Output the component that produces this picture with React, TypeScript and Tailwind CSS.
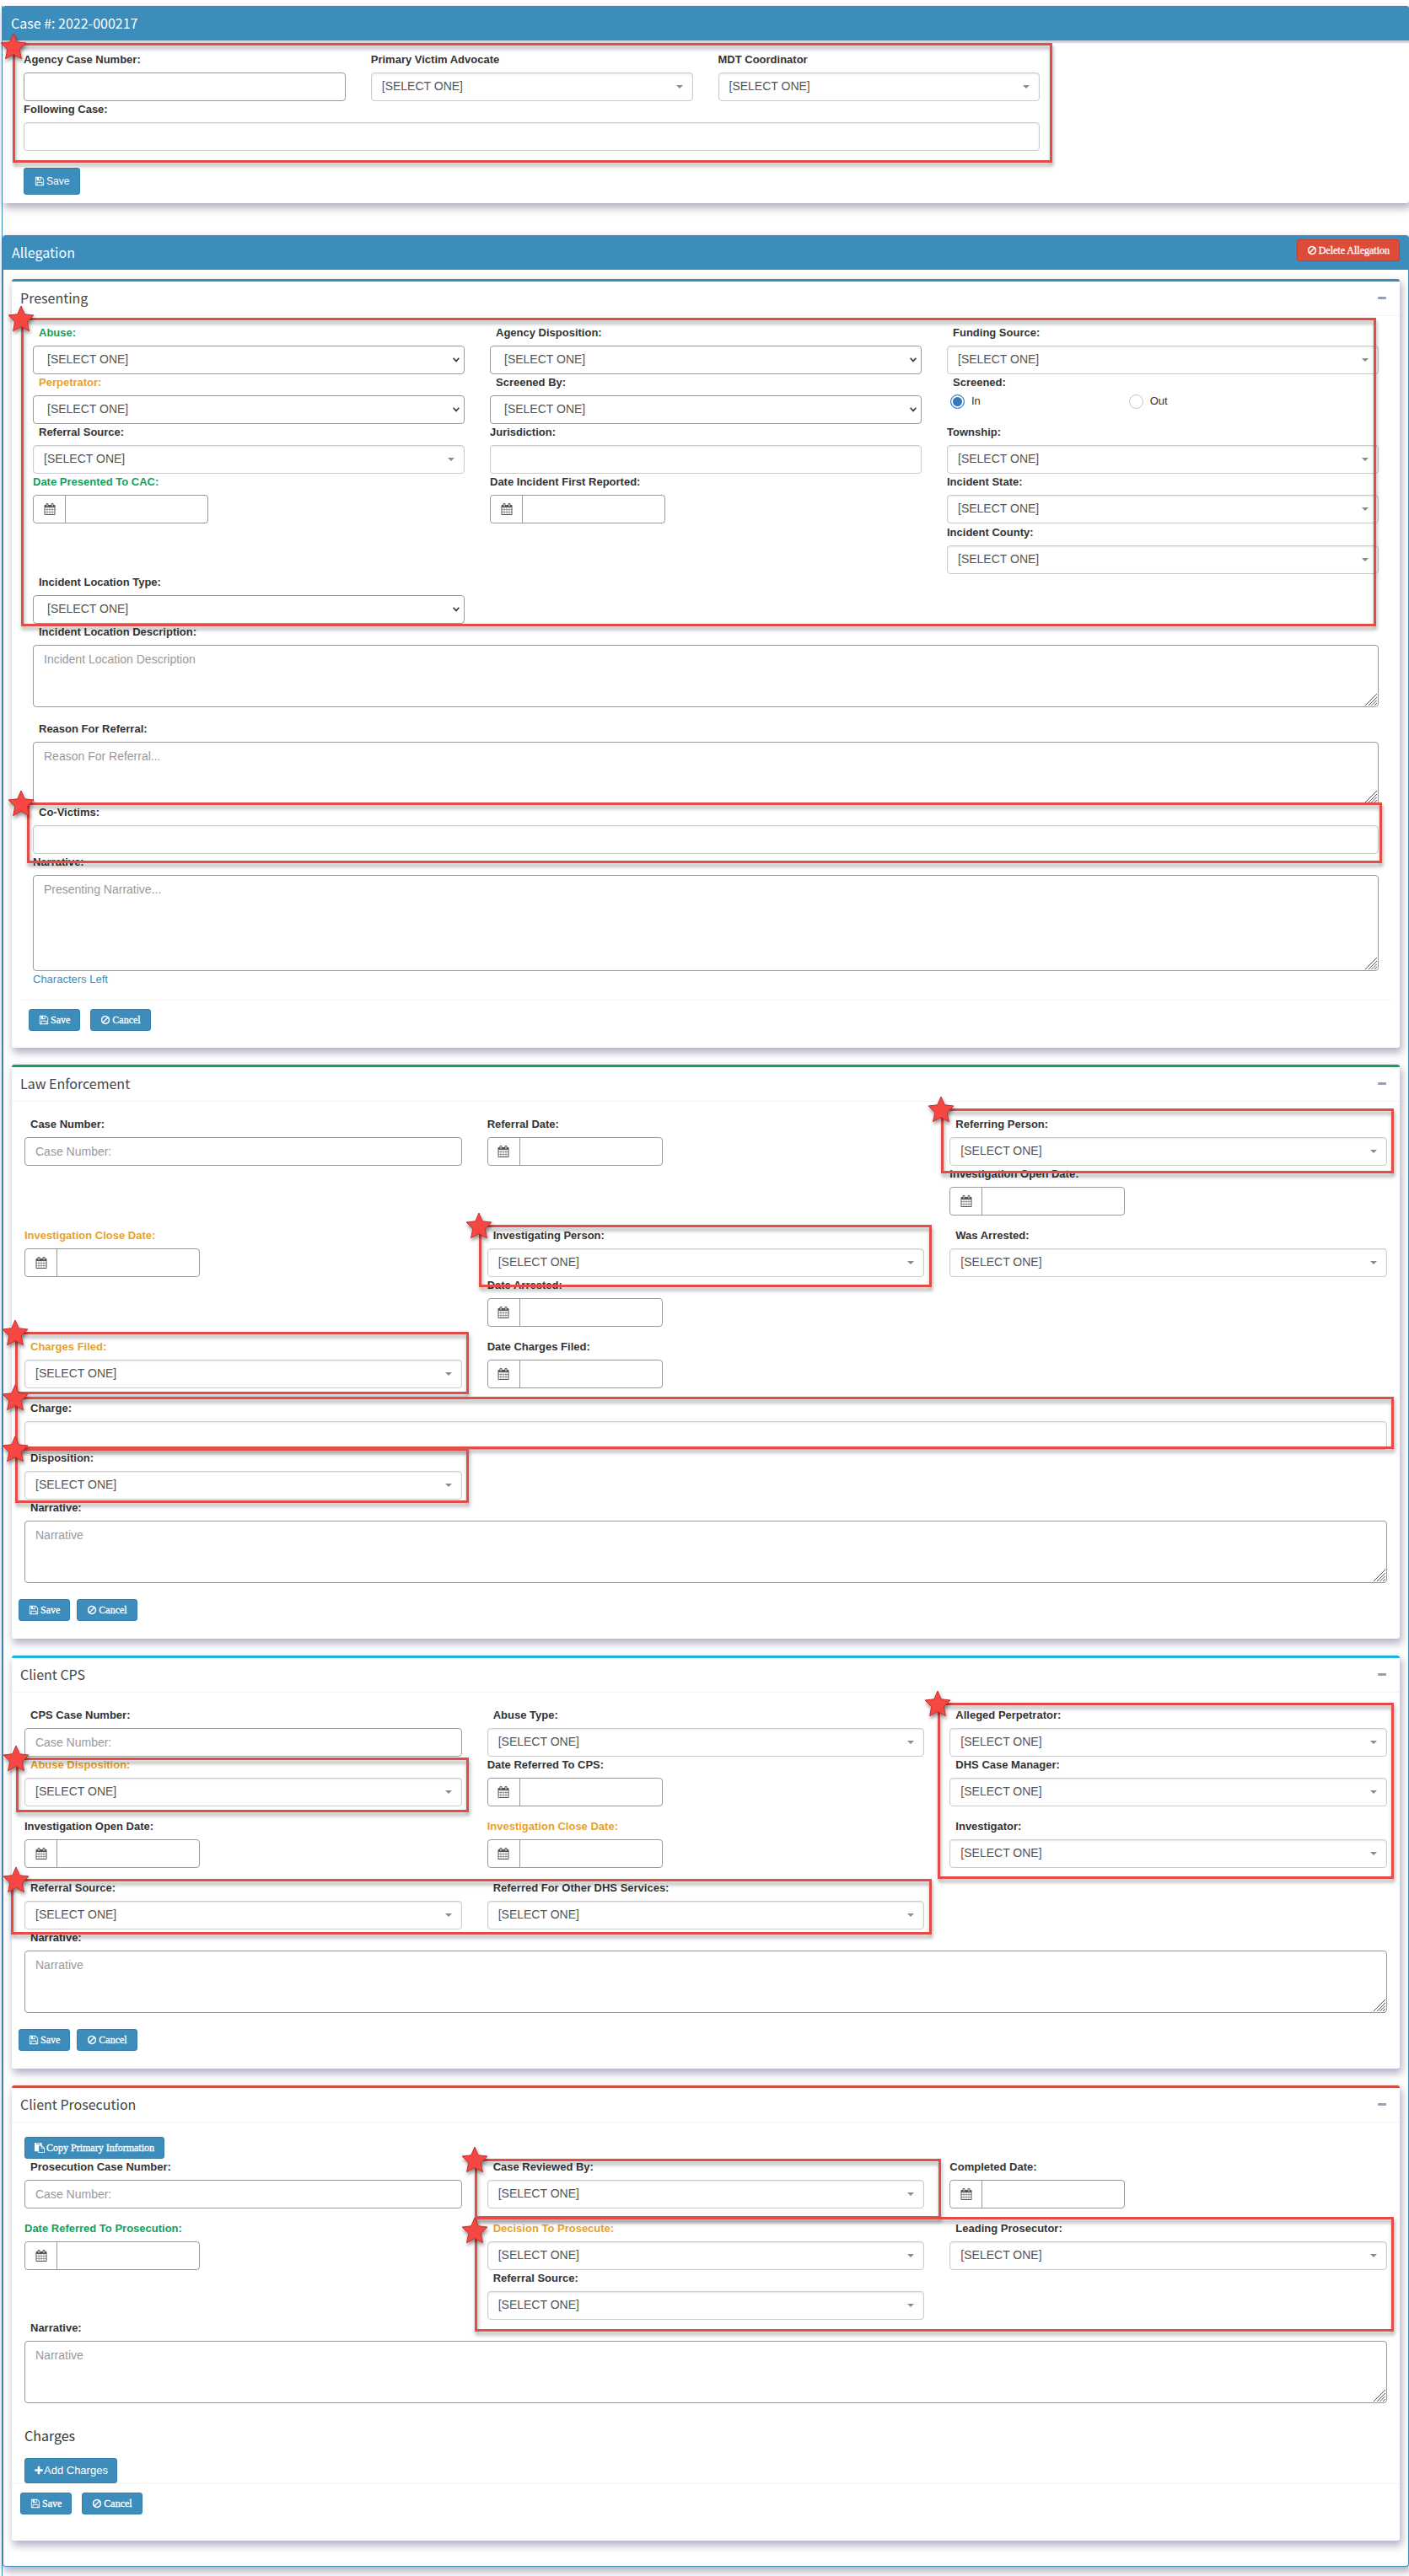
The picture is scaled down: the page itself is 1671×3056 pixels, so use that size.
import { useId } from "react";
import type { ReactNode } from "react";

const ICONS = {
  calendar:
    "M192 1664h288v-288h-288v288zM544 1664h320v-288h-320v288zM192 1312h288v-320h-288v320zM544 1312h320v-320h-320v320zM192 928h288v-288h-288v288zM928 1664h320v-288h-320v288zM544 928h320v-288h-320v288zM1312 1664h288v-288h-288v288zM928 1312h320v-320h-320v320zM576 448v-288q0-13-9.5-22.5t-22.5-9.5h-64q-13 0-22.5 9.5t-9.5 22.5v288q0 13 9.5 22.5t22.5 9.5h64q13 0 22.5-9.5t9.5-22.5zM1312 1312h288v-320h-288v320zM928 928h320v-288h-320v288zM1312 928h288v-288h-288v288zM1344 448v-288q0-13-9.5-22.5t-22.5-9.5h-64q-13 0-22.5 9.5t-9.5 22.5v288q0 13 9.5 22.5t22.5 9.5h64q13 0 22.5-9.5t9.5-22.5zM1728 384v1280q0 52-38 90t-90 38h-1408q-52 0-90-38t-38-90v-1280q0-52 38-90t90-38h128v-96q0-66 47-113t113-47h64q66 0 113 47t47 113v96h384v-96q0-66 47-113t113-47h64q66 0 113 47t47 113v96h128q52 0 90 38t38 90z",
  ban: "M1440 893q0-161-87-295l-754 753q137 89 297 89 111 0 211.5-43.5t173.5-116.5 116-174.5 43-212.5zm-999 299l755-754q-135-91-300-91-148 0-273 73t-198 199-73 274q0 162 89 299zm1223-299q0 157-61 300t-163.5 246-245 164-298.5 61-298.5-61-245-164-163.5-246-61-300 61-299.5 163.5-245.5 245-164 298.5-61 298.5 61 245 164 163.5 245.5 61 299.5z",
  save: "M512 1536h768v-384h-768v384zm896 0h128v-896q0-14-10-38.5t-20-34.5l-281-281q-10-10-34-20t-39-10v416q0 40-28 68t-68 28h-576q-40 0-68-28t-28-68v-416h-128v1280h128v-416q0-40 28-68t68-28h832q40 0 68 28t28 68v416zm-384-928v-320q0-13-9.5-22.5t-22.5-9.5h-192q-13 0-22.5 9.5t-9.5 22.5v320q0 13 9.5 22.5t22.5 9.5h192q13 0 22.5-9.5t9.5-22.5zm640 32v928q0 40-28 68t-68 28h-1344q-40 0-68-28t-28-68v-1344q0-40 28-68t68-28h928q40 0 88 20t76 48l280 280q28 28 48 76t20 88z",
  plus: "M1600 736v192q0 40-28 68t-68 28h-416v416q0 40-28 68t-68 28h-192q-40 0-68-28t-28-68v-416h-416q-40 0-68-28t-28-68v-192q0-40 28-68t68-28h416v-416q0-40 28-68t68-28h192q40 0 68 28t28 68v416h416q40 0 68 28t28 68z",
  paste:
    "M768 1664h896v-640h-416q-40 0-68-28t-28-68v-416h-384v1152zm256-1440v-64q0-13-9.5-22.5t-22.5-9.5h-704q-13 0-22.5 9.5t-9.5 22.5v64q0 13 9.5 22.5t22.5 9.5h704q13 0 22.5-9.5t9.5-22.5zm256 672h299l-299-299v299zm512 128v672q0 40-28 68t-68 28h-960q-40 0-68-28t-28-68v-160h-544q-40 0-68-28t-28-68v-1344q0-40 28-68t68-28h1088q40 0 68 28t28 68v328q21 13 36 28l408 408q28 28 48 76t20 88z",
};

type IconName = keyof typeof ICONS;

function Icon({ name, className = "size-3" }: { name: IconName; className?: string }) {
  return (
    <svg viewBox="0 0 1792 1792" fill="currentColor" aria-hidden="true" className={`shrink-0 ${className}`}>
      <path d={ICONS[name]} />
    </svg>
  );
}

/* ---------- callouts ---------- */

function Highlight({ className, star = "-left-4 -top-[15px]" }: { className: string; star?: string }) {
  return (
    <div className={`pointer-events-none absolute z-10 ${className}`} aria-hidden="true">
      <div className="absolute inset-0 border-3 border-[#e34d49] [filter:drop-shadow(1px_4px_2px_rgba(0,0,0,0.35))]" />
      <svg
        viewBox="0 0 32 32"
        className={`absolute z-20 size-8 overflow-visible [filter:drop-shadow(1px_3px_2px_rgba(0,0,0,0.45))] ${star}`}
      >
        <path
          d="M16 1 L20.2 10.8 L31 12 L23.2 19.6 L25.4 30.6 L16 25.4 L6.6 30.6 L8.8 19.6 L1 12 L11.8 10.8 Z"
          fill="#f74743"
          stroke="#c9302c"
          strokeWidth="1"
          strokeLinejoin="round"
        />
      </svg>
    </div>
  );
}

/* ---------- form pieces ---------- */

type Tone = "dark" | "green" | "orange";
const TONES: Record<Tone, string> = {
  dark: "text-[#333333]",
  green: "text-[#149f5b]",
  orange: "text-[#e8a12b]",
};

type Kind = "select" | "native" | "date" | "input" | "tags" | "textarea";

interface FieldProps {
  label: string;
  kind: Kind;
  tone?: Tone;
  flush?: boolean;
  placeholder?: string;
  tall?: boolean;
  className?: string;
  children?: ReactNode;
}

function Control({ id, kind, placeholder, tall }: { id: string; kind: Kind; placeholder?: string; tall?: boolean }) {
  if (kind === "select")
    return (
      <div className="relative">
        <select
          id={id}
          className="block h-[34px] w-full appearance-none rounded border border-[#cccccc] bg-white pr-8 pb-0.5 pl-3 text-sm text-[#555555] shadow-[inset_0_1px_2px_rgba(0,0,0,0.1)]"
        >
          <option>[SELECT ONE]</option>
        </select>
        <svg viewBox="0 0 8 4" className="pointer-events-none absolute top-[15px] right-3 h-1 w-2" aria-hidden="true">
          <path d="M0 0h8L4 4z" fill="#8a8a8a" />
        </svg>
      </div>
    );
  if (kind === "native")
    return (
      <div className="relative">
        <select
          id={id}
          className="block h-[34px] w-full appearance-none rounded border border-[#9a9a9a] bg-white pr-8 pb-0.5 pl-4 text-sm text-[#555555]"
        >
          <option>[SELECT ONE]</option>
        </select>
        <svg viewBox="0 0 8 6" className="pointer-events-none absolute top-[14px] right-1.5 h-1.5 w-2" aria-hidden="true">
          <path d="M.7 .7 4 4.6 7.3 .7" fill="none" stroke="#333333" strokeWidth="1.6" />
        </svg>
      </div>
    );
  if (kind === "date")
    return (
      <div className="flex h-[34px] w-52 rounded border border-[#9a9a9a] bg-white">
        <span className="flex w-[38px] items-center justify-center border-r border-[#9a9a9a] text-[#555555]">
          <Icon name="calendar" className="size-3.5" />
        </span>
        <input id={id} type="text" className="min-w-0 flex-1 rounded-r px-3 text-sm text-[#555555] outline-none" />
      </div>
    );
  if (kind === "textarea")
    return (
      <div className="relative">
        <textarea
          id={id}
          placeholder={placeholder}
          className={`block w-full resize-none rounded border border-[#9a9a9a] bg-white px-3 py-1.5 text-sm leading-5 placeholder:text-[#999999] ${tall ? "h-[114px]" : "h-[74px]"}`}
        />
        <svg viewBox="0 0 14 14" className="pointer-events-none absolute right-0.5 bottom-0.5 size-3.5" aria-hidden="true">
          <path d="M0 14 14 0M4 14 14 4M7.5 14 14 7.5M11 14 14 11" stroke="#555555" strokeWidth="1" />
        </svg>
      </div>
    );
  return (
    <input
      id={id}
      type="text"
      placeholder={placeholder}
      className={
        kind === "tags"
          ? "block h-[34px] w-full rounded border border-[#cccccc] bg-white px-3 text-sm shadow-[inset_0_1px_2px_rgba(0,0,0,0.08)]"
          : "block h-[34px] w-full rounded border border-[#9a9a9a] bg-white px-3 text-sm placeholder:text-[#999999]"
      }
    />
  );
}

function Field({ label, kind, tone = "dark", flush, placeholder, tall, className = "", children }: FieldProps) {
  const id = useId();
  return (
    <div className={`relative ${className}`}>
      <label
        htmlFor={id}
        className={`mb-[5px] block text-[13px] leading-5 font-bold ${flush ? "" : "pl-[7px]"} ${TONES[tone]}`}
      >
        {label}
      </label>
      <Control id={id} kind={kind} placeholder={placeholder} tall={tall} />
      {children}
    </div>
  );
}

function SmallButton({ icon, children, danger }: { icon: IconName; children: ReactNode; danger?: boolean }) {
  return (
    <button
      type="button"
      className={`flex h-[26px] items-center gap-0.5 rounded-[3px] border px-[11px] font-["Liberation_Serif",serif] text-xs font-normal text-white [-webkit-text-stroke:0.3px] ${
        danger ? "border-[#d73925] bg-[#dd4b39]" : "border-[#367fa9] bg-[#3c8dbc]"
      }`}
    >
      <Icon name={icon} />
      {children}
    </button>
  );
}

const HEADING = 'font-["Noto_Sans_CJK_SC",sans-serif] text-base leading-6 font-normal';
const SHADOW = "shadow-[2px_5px_10px_1px_rgba(70,65,110,0.4)]";

function Panel({ title, accent, children }: { title: string; accent: string; children: ReactNode }) {
  return (
    <section className={`rounded-[3px] border-t-3 bg-white ${accent} ${SHADOW}`}>
      <header className="flex h-[41px] items-center justify-between border-b border-[#f4f4f4] px-2.5 pb-0.5">
        <h3 className={`${HEADING} text-[#444444]`}>{title}</h3>
        <button type="button" aria-label={`Collapse ${title}`} className="flex h-5 items-center px-1.5">
          <svg viewBox="0 0 10 3" className="h-[3px] w-2.5" aria-hidden="true">
            <rect width="10" height="3" rx="1" fill="#97a0b3" />
          </svg>
        </button>
      </header>
      {children}
    </section>
  );
}

const GRID = "relative grid grid-cols-3 items-start gap-x-[30px]";

/* ---------- sections ---------- */

function CaseBox() {
  return (
    <section className={`rounded-[3px] bg-white ${SHADOW}`}>
      <header className="flex h-[41px] items-center rounded-t-[3px] bg-[#3c8dbc] px-2.5 pb-0.5 shadow-[0_3px_1px_#d2d2dc]">
        <h2 className={`${HEADING} text-white`}>Case #: 2022-000217</h2>
      </header>
      <div className="pt-[13px] pr-9 pb-2.5 pl-[25px]">
        <div className={`${GRID} w-3/4`}>
          <Field label="Agency Case Number:" kind="input" flush />
          <Field label="Primary Victim Advocate" kind="select" flush />
          <Field label="MDT Coordinator" kind="select" flush />
          <Field label="Following Case:" kind="tags" flush className="col-span-3" />
          <Highlight className="-top-2.5 -right-[15px] -bottom-3.5 -left-[13px]" star="-left-[15px] -top-3" />
        </div>
        <button
          type="button"
          className="mt-5 flex h-8 items-center gap-0.5 rounded-[3px] border border-[#367fa9] bg-[#3c8dbc] px-3 text-xs text-white"
        >
          <Icon name="save" />
          Save
        </button>
      </div>
    </section>
  );
}

function Presenting() {
  return (
    <Panel title="Presenting" accent="border-[#3c8dbc]">
      <div className="px-[25px] pt-2.5">
        <div className={GRID}>
          <Field label="Abuse:" kind="native" tone="green" />
          <Field label="Agency Disposition:" kind="native" />
          <Field label="Funding Source:" kind="select" />
          <Field label="Perpetrator:" kind="native" tone="orange" />
          <Field label="Screened By:" kind="native" />
          <fieldset className="text-[13px] text-[#333333]">
            <legend className="pl-[7px] text-[13px] leading-5 font-bold">Screened:</legend>
            <div className="grid grid-cols-12 pt-0.5 pl-1">
              {["In", "Out"].map((name, i) => (
                <label key={name} className="col-span-5 flex h-5 items-center gap-2">
                  <input
                    type="radio"
                    name="screened"
                    defaultChecked={i === 0}
                    className="size-[17px] appearance-none rounded-full border border-[#c4c4c4] bg-white checked:border-[#337ab7] checked:bg-[#337ab7] checked:shadow-[inset_0_0_0_2px_white]"
                  />
                  {name}
                </label>
              ))}
            </div>
          </fieldset>
          <Field label="Referral Source:" kind="select" />
          <Field label="Jurisdiction:" kind="tags" flush />
          <Field label="Township:" kind="select" flush />
          <Field label="Date Presented To CAC:" kind="date" tone="green" flush />
          <Field label="Date Incident First Reported:" kind="date" flush />
          <Field label="Incident State:" kind="select" flush />
          <Field label="Incident County:" kind="select" flush className="col-start-3 mt-px" />
          <Field label="Incident Location Type:" kind="native" className="col-start-1" />
          <Highlight className="-top-2 right-[3px] -bottom-[3px] -left-3.5" />
        </div>
        <Field label="Incident Location Description:" kind="textarea" placeholder="Incident Location Description" />
        <Field label="Reason For Referral:" kind="textarea" placeholder="Reason For Referral..." className="mt-4" />
        <Field label="Co-Victims:" kind="tags">
          <Highlight className="-top-0.5 -right-1 -bottom-[11px] -left-[7px]" star="-left-[23px] -top-[15px]" />
        </Field>
        <Field label="Narrative:" kind="textarea" tall flush placeholder="Presenting Narrative..." />
        <p className="text-[13px] leading-5 text-[#3c8dbc]">Characters Left</p>
      </div>
      <footer className="mx-2.5 mt-3.5 flex gap-3 border-t border-[#f4f4f4] px-2.5 pt-2.5 pb-5">
        <SmallButton icon="save">Save</SmallButton>
        <SmallButton icon="ban">Cancel</SmallButton>
      </footer>
    </Panel>
  );
}

function LawEnforcement() {
  return (
    <Panel title="Law Enforcement" accent="border-[#159b60]">
      <div className="px-[15px] pt-[17px]">
        <div className={GRID}>
          <Field label="Case Number:" kind="input" placeholder="Case Number:" />
          <Field label="Referral Date:" kind="date" flush />
          <Field label="Referring Person:" kind="select">
            <Highlight className="-top-[9px] -right-2 -bottom-[9px] -left-2.5" />
          </Field>
          <Field label="Investigation Open Date:" kind="date" flush className="col-start-3 mb-3.5" />
          <Field label="Investigation Close Date:" kind="date" tone="orange" flush />
          <Field label="Investigating Person:" kind="select">
            <Highlight className="-top-[3px] -right-[9px] -bottom-3 -left-2.5" />
          </Field>
          <Field label="Was Arrested:" kind="select" />
          <Field label="Date Arrested:" kind="date" flush className="col-start-2 mb-3.5" />
          <Field label="Charges Filed:" kind="select" tone="orange" className="col-start-1">
            <Highlight className="-top-2 -right-2 -bottom-[7px] -left-[11px]" />
          </Field>
          <Field label="Date Charges Filed:" kind="date" flush className="mb-3.5" />
          <Field label="Charge:" kind="tags" className="col-span-3">
            <Highlight className="-top-1 -right-2 bottom-px -left-[11px]" />
          </Field>
          <Field label="Disposition:" kind="select">
            <Highlight className="-top-0.5 -right-2 -bottom-1 -left-[11px]" />
          </Field>
          <Field label="Narrative:" kind="textarea" placeholder="Narrative" className="col-span-3" />
        </div>
      </div>
      <footer className="flex gap-2 px-2 pt-[19px] pb-[21px]">
        <SmallButton icon="save">Save</SmallButton>
        <SmallButton icon="ban">Cancel</SmallButton>
      </footer>
    </Panel>
  );
}

function ClientCps() {
  return (
    <Panel title="Client CPS" accent="border-[#1fb3dc]">
      <div className="px-[15px] pt-[17px]">
        <div className={GRID}>
          <Field label="CPS Case Number:" kind="input" placeholder="Case Number:" />
          <Field label="Abuse Type:" kind="select" />
          <Field label="Alleged Perpetrator:" kind="select" />
          <Field label="Abuse Disposition:" kind="select" tone="orange">
            <Highlight className="top-px -right-2 -bottom-[7px] -left-2.5" />
          </Field>
          <Field label="Date Referred To CPS:" kind="date" flush className="mb-3.5" />
          <Field label="DHS Case Manager:" kind="select" />
          <Field label="Investigation Open Date:" kind="date" flush />
          <Field label="Investigation Close Date:" kind="date" tone="orange" flush className="mb-3.5" />
          <Field label="Investigator:" kind="select" />
          <Field label="Referral Source:" kind="select" />
          <Field label="Referred For Other DHS Services:" kind="select" />
          <Field label="Narrative:" kind="textarea" placeholder="Narrative" className="col-span-3" />
          <Highlight className="col-start-3 col-end-4 row-start-1 row-end-4 -top-[5px] -right-2 bottom-px -left-3.5" />
          <Highlight
            className="col-start-1 col-end-3 row-start-4 row-end-5 -top-px -right-[9px] -bottom-1.5 -left-4"
            star="-left-2.5 -top-[15px]"
          />
        </div>
      </div>
      <footer className="flex gap-2 px-2 pt-[19px] pb-[21px]">
        <SmallButton icon="save">Save</SmallButton>
        <SmallButton icon="ban">Cancel</SmallButton>
      </footer>
    </Panel>
  );
}

function ClientProsecution() {
  return (
    <Panel title="Client Prosecution" accent="border-[#cd5044]">
      <div className="px-[15px] pt-[17px]">
        <SmallButton icon="paste">Copy Primary Information</SmallButton>
        <div className={GRID}>
          <Field label="Prosecution Case Number:" kind="input" placeholder="Case Number:" />
          <Field label="Case Reviewed By:" kind="select">
            <Highlight className="top-0 -right-5 -bottom-3 -left-[15px]" />
          </Field>
          <Field label="Completed Date:" kind="date" flush className="mb-3.5" />
          <Field label="Date Referred To Prosecution:" kind="date" tone="green" flush />
          <Field label="Decision To Prosecute:" kind="select" tone="orange" />
          <Field label="Leading Prosecutor:" kind="select" />
          <Field label="Referral Source:" kind="select" className="col-start-2" />
          <Field label="Narrative:" kind="textarea" placeholder="Narrative" className="col-span-3" />
          <Highlight
            className="col-start-2 col-end-4 row-start-2 row-end-4 -top-1 -right-2 -bottom-3.5 -left-[15px]"
            star="-left-4 top-0"
          />
        </div>
        <h4 className={`${HEADING} mt-[26px] mb-[15px] text-[#333333]`}>Charges</h4>
        <button
          type="button"
          className="flex h-[30px] items-center rounded-[3px] border border-[#367fa9] bg-[#3c8dbc] px-2.5 text-[13px] text-white"
        >
          <Icon name="plus" />
          Add Charges
        </button>
      </div>
      <footer className="flex gap-3 border-t border-[#f4f4f4] px-2.5 pt-2.5 pb-[31px]">
        <SmallButton icon="save">Save</SmallButton>
        <SmallButton icon="ban">Cancel</SmallButton>
      </footer>
    </Panel>
  );
}

export default function App() {
  return (
    <main className='overflow-x-clip bg-white pt-[7px] pl-0.5 font-["Liberation_Sans",Arial,sans-serif] text-[#333333]'>
      <div className="border-l border-[#3c8dbc] pb-[11px]">
        <CaseBox />
        <section className={`mt-[38px] rounded border border-t-0 border-[#3c8dbc] bg-white ${SHADOW}`}>
          <header className="flex h-[41px] items-center justify-between rounded-t-[3px] bg-[#3c8dbc] px-2.5 pb-0.5">
            <h2 className={`${HEADING} text-white`}>Allegation</h2>
            <div className="pb-1">
              <SmallButton icon="ban" danger>
                Delete Allegation
              </SmallButton>
            </div>
          </header>
          <div className="flex flex-col gap-5 px-2.5 pt-[11px] pb-[30px]">
            <Presenting />
            <LawEnforcement />
            <ClientCps />
            <ClientProsecution />
          </div>
        </section>
      </div>
    </main>
  );
}
